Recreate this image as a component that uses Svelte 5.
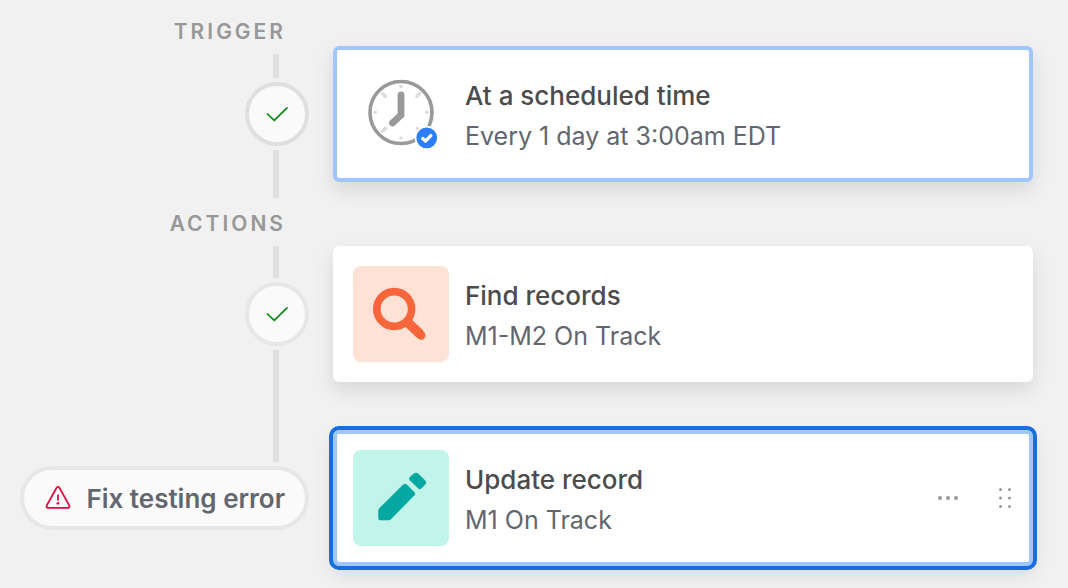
<script>
  const steps = [
    { icon: 'clock', title: 'At a scheduled time', detail: 'Every 1 day at 3:00am EDT', state: 'highlighted' },
    { icon: 'search', title: 'Find records', detail: 'M1-M2 On Track', state: '' },
    { icon: 'pencil', title: 'Update record', detail: 'M1 On Track', state: 'selected' }
  ];
</script>

{#snippet check()}
  <svg width="64" height="64" viewBox="0 0 64 64" fill="none" stroke="#048a0e" stroke-width="1.7" stroke-linecap="round" stroke-linejoin="round" aria-hidden="true">
    <path d="M22.500 32 29.300 38.400 42 25.800" />
  </svg>
{/snippet}

<main class="flow">
  <div class="rail">
    <h2 class="label">TRIGGER</h2>
    <div class="line short"></div>
    <div class="status strong" role="img" aria-label="Passed">{@render check()}</div>
    <div class="line medium"></div>
    <h2 class="label">ACTIONS</h2>
    <div class="line tall"></div>
    <div class="status" role="img" aria-label="Passed">{@render check()}</div>
    <div class="line long"></div>
    <button class="status pill" type="button">
      <svg width="26" height="26" viewBox="0 0 26 26" fill="none" aria-hidden="true">
        <path d="M11.6 2.8Q13 .8 14.4 2.8L24.2 20.4Q25 22.9 22.8 22.9H3.2Q1 22.9 1.8 20.4Z" stroke="#e5093f" stroke-width="1.8" stroke-linejoin="round" />
        <path d="M13 9.4V15.6" stroke="#e5093f" stroke-width="1.8" />
        <circle cx="13" cy="18.3" r="1.4" fill="#e5093f" />
      </svg>
      <span>Fix testing error</span>
    </button>
  </div>

  <div class="cards">
    {#each steps as step, i}
      <article class="card {step.state}" class:first={i === 0}>
        <div class="tile {step.icon}">
          {#if step.icon === 'clock'}
            <svg width="96" height="96" viewBox="0 0 96 96" fill="none" aria-hidden="true">
              <circle cx="48" cy="46.500" r="31" stroke="#999" stroke-width="3.600" />
              <g fill="#dcdcdc">
                <circle cx="48" cy="20.500" r="1.800" />
                <circle cx="48" cy="72" r="1.800" />
                <circle cx="22.300" cy="46.200" r="1.800" />
                <circle cx="73.800" cy="46.200" r="1.800" />
                <circle cx="64.300" cy="62.500" r="1.800" />
              </g>
              <path d="M29.500 27.500 32.500 30.500M66.800 27.200 63.800 30.200M29.500 65.300 32.500 62.300" stroke="#dcdcdc" stroke-width="3.400" stroke-linecap="round" />
              <path d="M48 29V49L39.500 57" stroke="#999" stroke-width="6.800" stroke-linecap="round" stroke-linejoin="miter" />
              <circle cx="73.700" cy="71.800" r="12" fill="#fff" />
              <circle cx="73.700" cy="71.800" r="10.400" fill="#2d7ff9" />
              <path d="M69.800 72.500 72.500 75.100 77.800 69.600" stroke="#fff" stroke-width="3.300" stroke-linecap="round" stroke-linejoin="round" />
            </svg>
          {:else if step.icon === 'search'}
            <svg width="96" height="96" viewBox="0 0 96 96" fill="none" stroke="#f7653b" aria-hidden="true">
              <circle cx="41.200" cy="43" r="17.400" stroke-width="7.600" />
              <path d="M54 55.700 67 68" stroke-width="9.500" />
              <path d="M65.800 66.800 68 69.200" stroke-width="9" stroke-linecap="round" />
            </svg>
          {:else}
            <svg width="96" height="96" viewBox="0 0 96 96" fill="#06a8a1" aria-hidden="true">
              <path d="M50.500 34.300Q52 33 53.500 34.300L61.500 42.300Q63 43.800 61.500 45.200L38 69.200Q37 70.200 35.500 70.200H27Q25.300 70.200 25.300 68.500V60.500Q25.300 59 26.500 57.900Z" />
              <path d="M60.500 23.800Q63 21.800 65.500 23.800L72 30.200Q74.300 32.500 72 34.800L68.300 38.600Q66.800 40.100 65.300 38.600L56.700 30.200Q55.300 28.800 56.700 27.300Z" />
            </svg>
          {/if}
        </div>
        <div class="text">
          <h3>{step.title}</h3>
          <p>{step.detail}</p>
        </div>
        {#if step.state === 'selected'}
          <div class="tools">
            <button type="button" aria-label="More options">
              <svg width="24" height="24" viewBox="0 0 24 24" fill="#999" aria-hidden="true">
                <circle cx="4" cy="12" r="2" /><circle cx="12" cy="12" r="2" /><circle cx="20" cy="12" r="2" />
              </svg>
            </button>
            <button type="button" aria-label="Reorder">
              <svg width="24" height="24" viewBox="0 0 24 24" fill="#999" aria-hidden="true">
                {#each [3.5, 12, 20.5] as y}
                  <circle cx="7.500" cy={y} r="1.500" /><circle cx="16.500" cy={y} r="1.500" />
                {/each}
              </svg>
            </button>
          </div>
        {/if}
      </article>
    {/each}
  </div>
</main>

<style>
  :global(body) {
    margin: 0;
    background: #f1f1f1;
  }
  .flow {
    display: grid;
    grid-template-columns: 289px minmax(0, 1fr);
    column-gap: 24px;
    padding: 6px 35px 22px 20px;
    font-family: Inter, "Liberation Sans", sans-serif;
  }
  h2, h3, p {
    margin: 0;
  }
  button {
    font: inherit;
    cursor: pointer;
  }
  .rail {
    display: flex;
    flex-direction: column;
    align-items: flex-end;
  }
  .label {
    padding: 4px 23px 0 0;
    font-size: 21px;
    line-height: 44px;
    font-weight: 600;
    letter-spacing: 3px;
    color: #989898;
  }
  .line {
    width: 6px;
    margin-right: 30px;
    background: #dfdfdf;
  }
  .short { height: 24px; }
  .medium { height: 48px; }
  .tall { height: 32px; }
  .long { height: 112px; }
  .status {
    box-sizing: border-box;
    display: flex;
    align-items: center;
    justify-content: center;
    width: 64px;
    height: 64px;
    margin: 4px 0;
    border: 4px solid #e7e7e7;
    border-radius: 32px;
    background: #fafafa;
  }
  .status svg {
    flex: none;
  }
  .strong {
    border-color: #dfdfdf;
  }
  .pill {
    width: 100%;
    padding: 0 20px 0 21px;
    justify-content: space-between;
    font-size: 26px;
    font-weight: 600;
    color: #616670;
    white-space: nowrap;
  }
  .cards {
    display: flex;
    flex-direction: column;
    gap: 48px;
    padding-top: 40px;
  }
  .card {
    box-sizing: border-box;
    display: flex;
    align-items: center;
    gap: 16px;
    min-height: 136px;
    padding: 16px 12px 16px 16px;
    border: 4px solid #fff;
    border-radius: 6px;
    background: #fff;
    box-shadow: 0 8px 20px rgba(0, 0, 0, 0.11);
  }
  .first {
    margin-bottom: 16px;
  }
  .highlighted {
    border-color: #a0c6ff;
  }
  .selected {
    border-color: #a0c6ff;
    outline: 4px solid #166ee1;
  }
  .tile {
    flex: none;
    width: 96px;
    height: 96px;
    border-radius: 8px;
  }
  .tile svg {
    display: block;
  }
  .search { background: #fee2d5; }
  .pencil { background: #c2f5e9; }
  .text {
    flex: 1;
    min-width: 0;
    padding-top: 3px;
  }
  h3, p {
    font-size: 25px;
    line-height: 41px;
  }
  h3 {
    font-size: 26px;
    font-weight: 500;
    color: #4c4c4c;
  }
  p {
    font-weight: 400;
    color: #616670;
  }
  .tools {
    display: flex;
    gap: 33px;
  }
  .tools button {
    padding: 0;
    border: 0;
    background: none;
    line-height: 0;
  }
</style>
